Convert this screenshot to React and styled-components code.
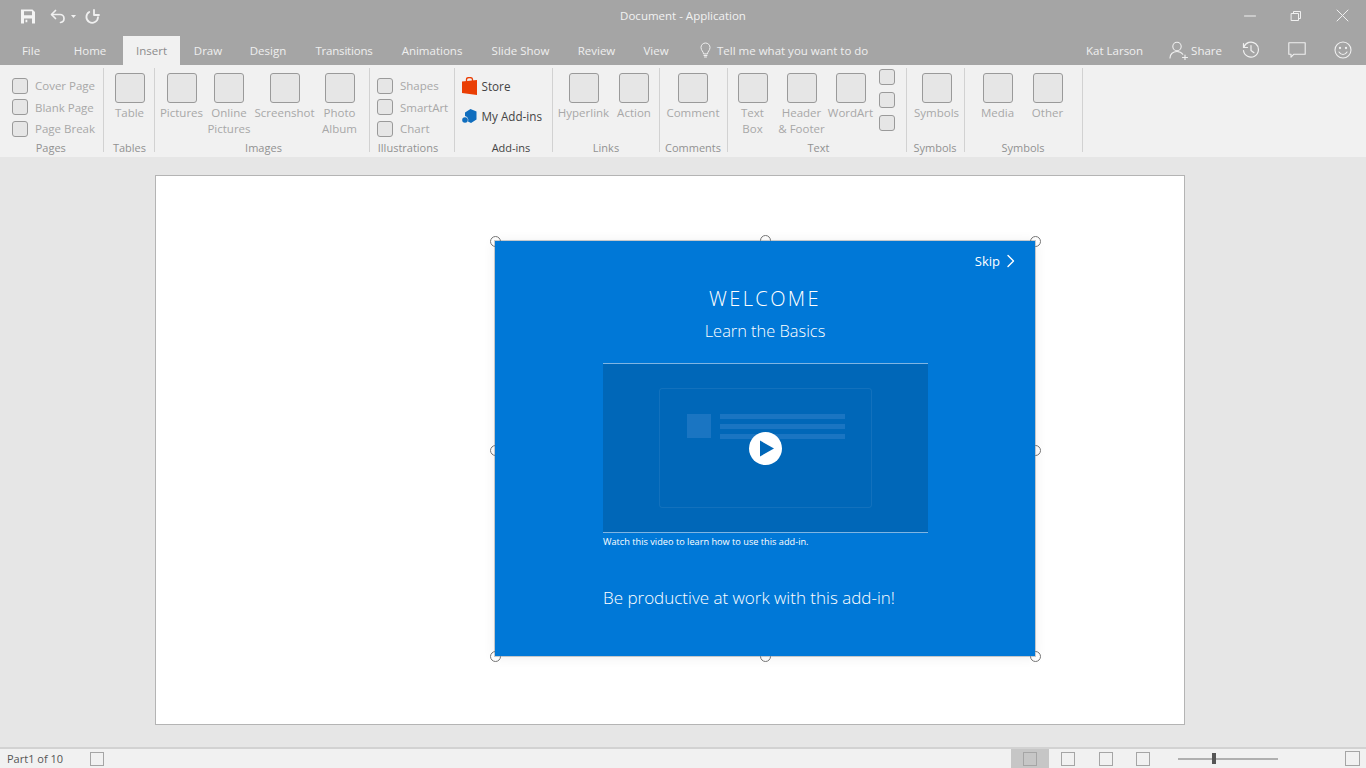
import React from "react";
import styled, { createGlobalStyle } from "styled-components";

const GlobalStyle = createGlobalStyle`
  html, body { margin: 0; padding: 0; }
  body { font-family: "Open Sans", "Noto Sans", sans-serif; background: #e6e6e6; }
  * { box-sizing: border-box; }
`;

const Page = styled.div`
  display: flex;
  flex-direction: column;
  width: 1366px;
  height: 768px;
  overflow: hidden;
`;

const Chrome = styled.header`
  height: 65px;
  flex: none;
  background: #a5a5a5;
  color: #f0f0f0;
`;

const TitleBar = styled.div`
  display: grid;
  grid-template-columns: 1fr auto 1fr;
  align-items: center;
  height: 36px;
  padding-bottom: 5px;
`;

const QuickAccess = styled.div`
  display: flex;
  align-items: center;
  padding: 2px 0 0 21px;
`;

const Title = styled.div`
  font-size: 11.5px;
  color: #f2f2f2;
`;

const WindowButtons = styled.div`
  display: flex;
  justify-content: flex-end;
  align-items: center;
  gap: 34px;
  padding-right: 17px;
`;

const TabRow = styled.nav`
  display: flex;
  align-items: stretch;
  height: 29px;
  padding-left: 5px;
  font-size: 11.5px;
`;

const Tab = styled.div`
  display: flex;
  align-items: center;
  justify-content: center;
  width: ${(p) => p.$w}px;
  padding-bottom: 1px;
  letter-spacing: ${(p) => (p.$tight ? "-0.2px" : "0")};
  color: ${(p) => (p.$active ? "#8c8c8c" : "#efefef")};
  background: ${(p) => (p.$active ? "#f1f1f1" : "transparent")};
`;

const TellMe = styled.div`
  display: flex;
  align-items: center;
  gap: 5px;
  margin-left: 15px;
  padding-bottom: 1px;
  color: #efefef;
`;

const Account = styled.div`
  display: flex;
  align-items: center;
  margin-left: auto;
  padding: 0 14px 1px 0;
`;

const UserName = styled.span`
  margin-right: 26px;
`;

const ShareLabel = styled.span`
  margin: 0 20px 0 2px;
`;

const IconGap = styled.span`
  width: 28px;
`;

const Ribbon = styled.section`
  display: flex;
  height: 92px;
  flex: none;
  background: #f1f1f1;
  font-size: 11.5px;
  color: #a8a8a8;
`;

const Group = styled.div`
  position: relative;
  display: flex;
  flex-direction: column;
  width: ${(p) => p.$w}px;
  flex: none;

  &::after {
    content: "";
    position: absolute;
    top: 3px;
    bottom: 5px;
    right: 0;
    width: 1px;
    background: #d2d2d2;
  }
`;

const GroupBody = styled.div`
  display: flex;
  flex: 1;
  min-height: 0;
  padding-top: ${(p) => p.$top ?? 8}px;
  padding-left: ${(p) => p.$left ?? 0}px;
  flex-direction: ${(p) => (p.$stack ? "column" : "row")};
`;

const GroupLabel = styled.div`
  height: 16px;
  margin-bottom: 1px;
  padding-left: ${(p) => p.$pl ?? 0}px;
  padding-right: ${(p) => p.$pr ?? 1}px;
  line-height: 16px;
  text-align: center;
  font-size: 11px;
  color: ${(p) => (p.$strong ? "#444" : "#929292")};
`;

const BigButton = styled.div`
  display: flex;
  flex-direction: column;
  align-items: center;
  width: ${(p) => p.$w}px;
  flex: none;
  line-height: 16px;
  text-align: center;
  white-space: nowrap;
`;

const BigIcon = styled.div`
  width: 30px;
  height: 30px;
  margin-bottom: 2px;
  flex: none;
  border: 1px solid #9a9a9a;
  border-radius: 3px;
  background: #e6e6e6;
`;

const SmallRow = styled.div`
  display: flex;
  align-items: center;
  height: 21.5px;
  gap: 7px;
  white-space: nowrap;
`;

const SmallIcon = styled.div`
  width: 16px;
  height: 16px;
  flex: none;
  border: 1px solid #9a9a9a;
  border-radius: 3px;
  background: #e6e6e6;
`;

const MiniStack = styled.div`
  display: flex;
  flex-direction: column;
  gap: 7px;
  margin: -4px 0 0 3px;
`;

const AddInRow = styled.div`
  display: flex;
  align-items: center;
  height: 30px;
  gap: 5px;
  padding-left: 7px;
  font-size: 11.7px;
  color: #444;
  white-space: nowrap;
`;

const Workspace = styled.main`
  flex: 1;
  min-height: 0;
  padding: 18px 0 0 155px;
  background: #e6e6e6;
`;

const Slide = styled.div`
  width: 1030px;
  height: 550px;
  padding: 65px 0 0 339px;
  border: 1px solid #b4b4b4;
  background: #fff;
`;

const Selection = styled.div`
  position: relative;
  width: 540px;
  height: 415px;
`;

const Handle = styled.span`
  position: absolute;
  left: ${(p) => p.$x}px;
  top: ${(p) => p.$y}px;
  width: 11px;
  height: 11px;
  margin: -5.5px 0 0 -5.5px;
  border: 1px solid #767676;
  border-radius: 50%;
  background: #fff;
`;

const Card = styled.div`
  position: relative;
  display: flex;
  flex-direction: column;
  height: 100%;
  padding: 11px 0 0 108px;
  background: #0078d7;
  color: #fff;
  box-shadow: 0 0 0 1px rgba(120, 130, 140, 0.4), 0 1px 12px rgba(0, 0, 0, 0.08);
`;

const SkipRow = styled.div`
  display: flex;
  justify-content: flex-end;
  align-items: center;
  gap: 6px;
  height: 18px;
  padding-right: 20px;
  margin-left: -108px;
  font-size: 13px;
`;

const Welcome = styled.h1`
  margin: 15px 0 0 -108px;
  height: 28px;
  line-height: 28px;
  text-align: center;
  font-size: 20px;
  font-weight: 300;
  letter-spacing: 2.4px;
`;

const Subtitle = styled.h2`
  margin: 6px 0 0 -108px;
  height: 24px;
  line-height: 24px;
  text-align: center;
  font-size: 16.4px;
  font-weight: 300;
`;

const Video = styled.div`
  display: flex;
  align-items: center;
  justify-content: center;
  width: 325px;
  height: 170px;
  margin-top: 20px;
  border-top: 1px solid #7fb5e3;
  border-bottom: 1px solid #7fb5e3;
  background: #0067b8;
`;

const VideoFrame = styled.div`
  position: relative;
  display: flex;
  gap: 9px;
  width: 213px;
  height: 120px;
  padding: 25px 0 0 27px;
  border: 1px solid rgba(255, 255, 255, 0.07);
  border-radius: 3px;
`;

const Thumb = styled.div`
  width: 24px;
  height: 24px;
  background: #1a75c2;
`;

const ThumbLines = styled.div`
  display: flex;
  flex-direction: column;
  gap: 5px;
`;

const ThumbLine = styled.div`
  width: 125px;
  height: 5px;
  background: #1a75c2;
`;

const PlayButton = styled.div`
  position: absolute;
  left: 89px;
  top: 43px;
  width: 33px;
  height: 33px;
`;

const Caption = styled.p`
  margin: 2px 0 0;
  line-height: 14px;
  font-size: 9.2px;
`;

const Tagline = styled.p`
  margin: 37px 0 0;
  line-height: 24px;
  font-size: 17px;
  font-weight: 300;
`;

const StatusBar = styled.footer`
  display: flex;
  align-items: center;
  height: 21px;
  flex: none;
  border-top: 2px solid #d2d2d2;
  background: #f1f1f1;
  font-size: 11px;
  color: #555;
`;

const PartCount = styled.span`
  width: 90px;
  padding-left: 7px;
`;

const StatusBox = styled.span`
  display: block;
  width: ${(p) => p.$size ?? 14}px;
  height: ${(p) => p.$size ?? 14}px;
  border: 1px solid #a5a5a5;
`;

const ViewButtons = styled.div`
  display: flex;
  align-self: stretch;
  margin-left: auto;
`;

const ViewButton = styled.div`
  display: flex;
  align-items: center;
  justify-content: center;
  width: 37.67px;
  background: ${(p) => (p.$active ? "#c6c6c6" : "transparent")};
`;

const ZoomTrack = styled.div`
  position: relative;
  width: 100px;
  height: 2px;
  margin: 0 67px 0 16px;
  background: #b0b0b0;
`;

const ZoomThumb = styled.span`
  position: absolute;
  left: 34px;
  top: -5px;
  width: 4px;
  height: 11px;
  background: #555;
`;

const EndPad = styled.span`
  width: 6px;
`;

const Line = ({ w, h, children, stroke = "#f0f0f0", sw = 1.2 }) => (
  <svg width={w} height={h} viewBox={`0 0 ${w} ${h}`} fill="none" stroke={stroke} strokeWidth={sw} strokeLinecap="round" strokeLinejoin="round">
    {children}
  </svg>
);

const SaveIcon = () => (
  <svg width="14" height="15" viewBox="0 0 14 15" style={{ marginRight: 15 }}>
    <path
      fill="#f4f4f4"
      fillRule="evenodd"
      d="M0 0.5h11.5l2.5 2.5v11.5H0z M3 2.2v4h8v-4z M3 9.5v5h8v-5z M4.5 10.8h1.8v2.4H4.5z"
    />
  </svg>
);

const UndoIcon = () => (
  <Line w={17} h={15} sw={1.7}>
    <path d="M5.5 1.5 1.5 5.5l4 4" />
    <path d="M1.8 5.5H10a4 4 0 0 1 4 4 4 4 0 0 1-3.5 4" />
  </Line>
);

const RedoIcon = () => (
  <Line w={15} h={15} sw={1.8}>
    <path d="M9 1v5h5" />
    <path d="M4.2 3A5.8 5.8 0 1 0 13 8.2" />
  </Line>
);

const Caret = () => (
  <svg width="5" height="3" viewBox="0 0 5 3" style={{ margin: "0 9px 0 4px" }}>
    <path d="M0 0h5L2.5 3z" fill="#f0f0f0" />
  </svg>
);

const BulbIcon = () => (
  <Line w={13} h={16} sw={1}>
    <path d="M4.5 11.5C4.5 9.5 2 8.5 2 5.5a4.5 4.5 0 0 1 9 0c0 3-2.5 4-2.5 6z" />
    <path d="M5 13.5h3M5.5 15h2" />
  </Line>
);

const UserIcon = () => (
  <Line w={20} h={19} sw={1.1}>
    <circle cx="8" cy="5.5" r="4.2" />
    <path d="M1 17c0-4 3-6.5 7-6.5 2.5 0 4.5 1 5.8 2.8" />
    <path d="M16 14v5M13.5 16.5h5" />
  </Line>
);

const HistoryIcon = () => (
  <Line w={18} h={18} sw={1.2}>
    <path d="M1.5 2.5v4h4" />
    <path d="M1.8 6.3A7.5 7.5 0 1 1 1.5 9.5" />
    <path d="M9 4.5V9.5l3 2.2" />
  </Line>
);

const CommentIcon = () => (
  <Line w={18} h={16} sw={1.1}>
    <path d="M0.8 0.8h16.4v11.4H6l-3 3v-3H0.8z" />
  </Line>
);

const SmileIcon = () => (
  <Line w={18} h={18} sw={1.1}>
    <circle cx="9" cy="9" r="8" />
    <circle cx="6" cy="7" r="0.6" />
    <circle cx="12" cy="7" r="0.6" />
    <path d="M5 11c1 1.7 2.4 2.5 4 2.5s3-.8 4-2.5" />
  </Line>
);

const StoreIcon = () => (
  <svg width="15" height="18" viewBox="0 0 15 18">
    <path d="M0 4.5 15 3v15L0 16z" fill="#ea3e04" />
    <path d="M4.5 5V2.4C4.5 1 5.6 0.5 7.5 0.5s3 .5 3 1.9V4.6" fill="none" stroke="#ea3e04" strokeWidth="1.3" />
  </svg>
);

const AddInsIcon = () => (
  <svg width="15" height="15" viewBox="0 0 15 15">
    <path d="M8.5 0 14.5 2.5v8l-5.5 3.5-3-1.5a4 4 0 0 0-3-5.5V3.5z" fill="#106ebe" />
    <circle cx="3" cy="11" r="2.8" fill="#106ebe" />
  </svg>
);

const tabs = [
  ["File", 52],
  ["Home", 66],
  ["Insert", 57, true],
  ["Draw", 56],
  ["Design", 64],
  ["Transitions", 88],
  ["Animations", 88],
  ["Slide Show", 89],
  ["Review", 63],
  ["View", 56],
];

const handles = [
  [0, 0],
  [270, -1],
  [540, 0],
  [0, 209],
  [540, 209],
  [0, 415],
  [270, 415],
  [540, 415],
];

const Big = ({ w, children }) => (
  <BigButton $w={w}>
    <BigIcon />
    {children}
  </BigButton>
);

const Small = ({ children }) => (
  <SmallRow>
    <SmallIcon />
    {children}
  </SmallRow>
);

const App = () => (
  <Page>
    <GlobalStyle />
    <Chrome>
      <TitleBar>
        <QuickAccess>
          <SaveIcon />
          <UndoIcon />
          <Caret />
          <RedoIcon />
        </QuickAccess>
        <Title>Document - Application</Title>
        <WindowButtons>
          <Line w={12} h={12} sw={1}>
            <path d="M0.5 6h11" />
          </Line>
          <Line w={12} h={12} sw={1}>
            <path d="M1.5 3.5h7v7h-7z" />
            <path d="M3.5 3.5v-2h7v7h-2" />
          </Line>
          <Line w={13} h={13} sw={1}>
            <path d="M1 1l11 11M12 1 1 12" />
          </Line>
        </WindowButtons>
      </TitleBar>
      <TabRow>
        {tabs.map(([name, w, active]) => (
          <Tab key={name} $w={w} $active={active} $tight={name === "Transitions"}>
            {name}
          </Tab>
        ))}
        <TellMe>
          <BulbIcon />
          Tell me what you want to do
        </TellMe>
        <Account>
          <UserName>Kat Larson</UserName>
          <UserIcon />
          <ShareLabel>Share</ShareLabel>
          <HistoryIcon />
          <IconGap />
          <CommentIcon />
          <IconGap />
          <SmileIcon />
        </Account>
      </TabRow>
    </Chrome>

    <Ribbon>
      <Group $w={103.5}>
        <GroupBody $stack $top={10} $left={12}>
          <Small>Cover Page</Small>
          <Small>Blank Page</Small>
          <Small>Page Break</Small>
        </GroupBody>
        <GroupLabel $pr={2}>Pages</GroupLabel>
      </Group>
      <Group $w={51}>
        <GroupBody>
          <Big w={52}>Table</Big>
        </GroupBody>
        <GroupLabel $pl={1} $pr={0}>Tables</GroupLabel>
      </Group>
      <Group $w={215}>
        <GroupBody>
          <Big w={54}>Pictures</Big>
          <Big w={41}>
            Online
            <br />
            Pictures
          </Big>
          <Big w={70}>Screenshot</Big>
          <Big w={40}>
            Photo
            <br />
            Album
          </Big>
        </GroupBody>
        <GroupLabel $pl={3} $pr={0}>Images</GroupLabel>
      </Group>
      <Group $w={85}>
        <GroupBody $stack $top={10} $left={7.5}>
          <Small>Shapes</Small>
          <Small>SmartArt</Small>
          <Small>Chart</Small>
        </GroupBody>
        <GroupLabel $pr={8}>Illustrations</GroupLabel>
      </Group>
      <Group $w={98}>
        <GroupBody $stack $top={6}>
          <AddInRow>
            <StoreIcon />
            Store
          </AddInRow>
          <AddInRow>
            <AddInsIcon />
            My Add-ins
          </AddInRow>
        </GroupBody>
        <GroupLabel $strong $pl={15} $pr={0}>Add-ins</GroupLabel>
      </Group>
      <Group $w={107}>
        <GroupBody>
          <Big w={62}>Hyperlink</Big>
          <Big w={39}>Action</Big>
        </GroupBody>
        <GroupLabel $pl={1}>Links</GroupLabel>
      </Group>
      <Group $w={68}>
        <GroupBody>
          <Big w={67}>Comment</Big>
        </GroupBody>
        <GroupLabel>Comments</GroupLabel>
      </Group>
      <Group $w={179}>
        <GroupBody>
          <Big w={50}>
            Text
            <br />
            Box
          </Big>
          <Big w={48}>
            Header
            <br />& Footer
          </Big>
          <Big w={50}>WordArt</Big>
          <MiniStack>
            <SmallIcon />
            <SmallIcon />
            <SmallIcon />
          </MiniStack>
        </GroupBody>
        <GroupLabel $pl={3} $pr={0}>Text</GroupLabel>
      </Group>
      <Group $w={58}>
        <GroupBody>
          <Big w={60}>Symbols</Big>
        </GroupBody>
        <GroupLabel>Symbols</GroupLabel>
      </Group>
      <Group $w={118}>
        <GroupBody>
          <Big w={66}>Media</Big>
          <Big w={34}>Other</Big>
        </GroupBody>
        <GroupLabel>Symbols</GroupLabel>
      </Group>
    </Ribbon>

    <Workspace>
      <Slide>
        <Selection>
          {handles.map(([x, y]) => (
            <Handle key={`${x}-${y}`} $x={x} $y={y} />
          ))}
          <Card>
            <SkipRow>
              Skip
              <Line w={9} h={14} stroke="#fff" sw={1.4}>
                <path d="M2 1.5 7.5 7 2 12.5" />
              </Line>
            </SkipRow>
            <Welcome>WELCOME</Welcome>
            <Subtitle>Learn the Basics</Subtitle>
            <Video>
              <VideoFrame>
                <Thumb />
                <ThumbLines>
                  <ThumbLine />
                  <ThumbLine />
                  <ThumbLine />
                </ThumbLines>
                <PlayButton>
                  <svg width="33" height="33" viewBox="0 0 33 33">
                    <circle cx="16.5" cy="16.5" r="16.5" fill="#fff" />
                    <path d="M11 8.5v16L25 16.5z" fill="#0067b8" />
                  </svg>
                </PlayButton>
              </VideoFrame>
            </Video>
            <Caption>Watch this video to learn how to use this add-in.</Caption>
            <Tagline>Be productive at work with this add-in!</Tagline>
          </Card>
        </Selection>
      </Slide>
    </Workspace>

    <StatusBar>
      <PartCount>Part1 of 10</PartCount>
      <StatusBox />
      <ViewButtons>
        <ViewButton $active>
          <StatusBox />
        </ViewButton>
        <ViewButton>
          <StatusBox />
        </ViewButton>
        <ViewButton>
          <StatusBox />
        </ViewButton>
        <ViewButton>
          <StatusBox />
        </ViewButton>
      </ViewButtons>
      <ZoomTrack>
        <ZoomThumb />
      </ZoomTrack>
      <StatusBox $size={15} />
      <EndPad />
    </StatusBar>
  </Page>
);

export default App;
